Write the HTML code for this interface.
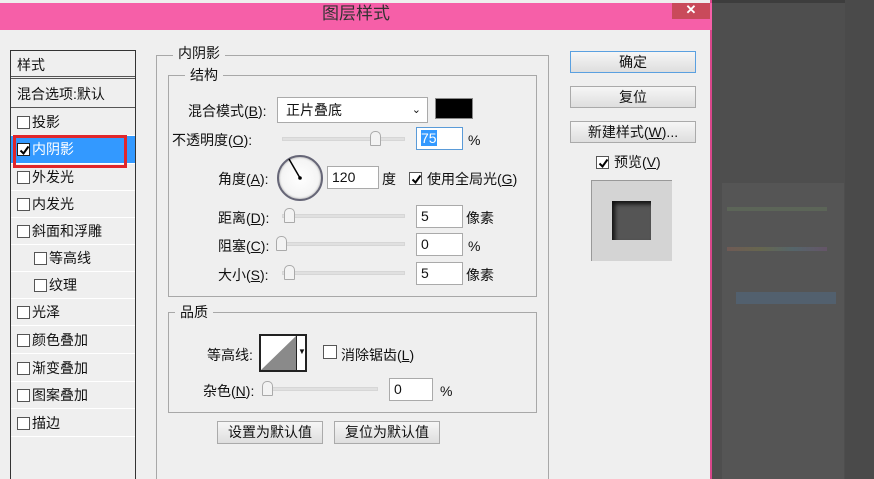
<!DOCTYPE html>
<html style="overflow:hidden"><head><meta charset="utf-8"><style>
*{box-sizing:border-box;margin:0;padding:0}
html,body{width:874px;height:479px;overflow:hidden}
body{position:relative;background:#4e4e4e;font-family:"Liberation Sans","Noto Sans CJK SC",sans-serif;font-size:14px;color:#111}
.a{position:absolute}
.dlg{left:0;top:0;width:712px;height:479px;background:#efefef;border-right:2px solid #d9478b}
.title{left:0;top:3px;width:712px;height:27px;background:#f65fa8;text-align:center;font-size:17px;line-height:22px;color:#333}
.lbl{white-space:nowrap;line-height:18px}
.list{left:10px;top:50px;width:126px;height:429px;border:1px solid #333;border-bottom:none;background:#efefef;overflow:hidden}
.item{position:absolute;left:0;width:124px;height:27px;border-bottom:1px solid #fff;line-height:26px;padding-left:6px}
.cb{display:inline-block;width:13px;height:13px;border:1px solid #555;background:#fff;vertical-align:-2px;margin-right:2px;position:relative}
.cb svg{position:absolute;left:1px;top:1px}
.grp{border:1px solid #a8a8a8}
.leg{background:#efefef;padding:0 5px;line-height:16px}
.inp{background:#fff;border:1px solid #aaa;height:23px;line-height:21px;padding-left:4px}
.sl{height:4px;background:#e0e0e0;border:1px solid #d6d6d6}
.th{width:11px;height:15px;border:1px solid #aaa;background:#f3f3f3;border-radius:5px 5px 1px 1px}
.btn{border:1px solid #aaa;background:linear-gradient(#f6f6f6,#dedede);text-align:center;line-height:20px;height:22px}
</style></head><body>
<div class="a" style="left:0;top:0;width:874px;height:3px;background:#3d3d3d"></div>
<div class="a" style="left:722px;top:183px;width:122px;height:296px;background:#555"></div>
<div class="a" style="left:845px;top:0;width:29px;height:479px;background:#4a4a4a"></div>
<div class="a" style="left:727px;top:207px;width:100px;height:4px;background:#5c6558"></div>
<div class="a" style="left:727px;top:247px;width:100px;height:4px;background:linear-gradient(90deg,#6f5a55,#66664f,#55656a,#655568)"></div>
<div class="a" style="left:736px;top:292px;width:100px;height:12px;background:#52606e"></div>
<div class="a dlg"></div>
<div class="a title">图层样式</div>
<div class="a" style="left:672px;top:3px;width:38px;height:16px;background:#c94a5a;color:#fff;text-align:center;font-size:13px;line-height:14px;font-weight:bold">✕</div>

<div class="a list">
 <div class="item" style="top:0;height:28px;line-height:28px;border-bottom:3px double #555">样式</div>
 <div class="item" style="top:30px;border-bottom:1px solid #555">混合选项:默认</div>
 <div class="item" style="top:58px"><span class="cb"></span>投影</div>
 <div class="item" style="top:85px;background:#3399ff;color:#fff;height:28px"><span class="cb" style="border-color:#222"><svg width="11" height="11"><path d="M1.5 5.5 L4.5 8.5 L9.5 1.5" stroke="#000" stroke-width="2" fill="none"/></svg></span>内阴影</div>
 <div class="item" style="top:113px"><span class="cb"></span>外发光</div>
 <div class="item" style="top:140px"><span class="cb"></span>内发光</div>
 <div class="item" style="top:167px"><span class="cb"></span>斜面和浮雕</div>
 <div class="item" style="top:194px;padding-left:23px"><span class="cb"></span>等高线</div>
 <div class="item" style="top:221px;padding-left:23px"><span class="cb"></span>纹理</div>
 <div class="item" style="top:248px"><span class="cb"></span>光泽</div>
 <div class="item" style="top:276px"><span class="cb"></span>颜色叠加</div>
 <div class="item" style="top:304px"><span class="cb"></span>渐变叠加</div>
 <div class="item" style="top:331px"><span class="cb"></span>图案叠加</div>
 <div class="item" style="top:359px"><span class="cb"></span>描边</div>
</div>
<div class="a" style="left:13px;top:135px;width:114px;height:33px;border:3px solid #e0262b"></div>

<div class="a grp" style="left:156px;top:55px;width:393px;height:430px"></div>
<div class="a leg lbl" style="left:173px;top:45px">内阴影</div>
<div class="a grp" style="left:168px;top:75px;width:369px;height:222px"></div>
<div class="a leg lbl" style="left:185px;top:67px">结构</div>

<div class="a lbl" style="left:188px;top:102px">混合模式(<u>B</u>):</div>
<div class="a inp" style="left:277px;top:97px;width:151px;height:26px;line-height:24px;padding-left:8px">正片叠底<span style="position:absolute;right:6px;font-size:11px">⌄</span></div>
<div class="a" style="left:435px;top:98px;width:38px;height:21px;background:#000;border:1px solid #888"></div>

<div class="a lbl" style="left:172px;top:131px">不透明度(<u>O</u>):</div>
<div class="a sl" style="left:282px;top:137px;width:123px"></div>
<div class="a th" style="left:370px;top:131px"></div>
<div class="a inp" style="left:416px;top:127px;width:47px;border-color:#5a9bd8"><span style="background:#3399ff;color:#fff">75</span></div>
<div class="a lbl" style="left:468px;top:131px">%</div>

<div class="a lbl" style="left:218px;top:170px">角度(<u>A</u>):</div>
<div class="a" style="left:277px;top:155px;width:46px;height:46px;border-radius:50%;border:2px solid #667;background:radial-gradient(#fff,#eee);box-shadow:inset 0 0 2px #999"></div>
<svg class="a" style="left:277px;top:155px" width="46" height="46"><line x1="23" y1="23" x2="12" y2="4" stroke="#000" stroke-width="1.5"/><circle cx="23" cy="23" r="1.8"/></svg>
<div class="a inp" style="left:327px;top:166px;width:52px">120</div>
<div class="a lbl" style="left:382px;top:170px">度</div>
<div class="a" style="left:409px;top:170px"><span class="cb"><svg width="11" height="11"><path d="M1.5 5.5 L4.5 8.5 L9.5 1.5" stroke="#000" stroke-width="2" fill="none"/></svg></span></div>
<div class="a lbl" style="left:427px;top:170px">使用全局光(<u>G</u>)</div>

<div class="a lbl" style="left:218px;top:209px">距离(<u>D</u>):</div>
<div class="a sl" style="left:282px;top:214px;width:123px"></div>
<div class="a th" style="left:284px;top:208px"></div>
<div class="a inp" style="left:416px;top:205px;width:47px">5</div>
<div class="a lbl" style="left:466px;top:209px">像素</div>

<div class="a lbl" style="left:218px;top:237px">阻塞(<u>C</u>):</div>
<div class="a sl" style="left:282px;top:242px;width:123px"></div>
<div class="a th" style="left:276px;top:236px"></div>
<div class="a inp" style="left:416px;top:233px;width:47px">0</div>
<div class="a lbl" style="left:468px;top:237px">%</div>

<div class="a lbl" style="left:218px;top:266px">大小(<u>S</u>):</div>
<div class="a sl" style="left:282px;top:271px;width:123px"></div>
<div class="a th" style="left:284px;top:265px"></div>
<div class="a inp" style="left:416px;top:262px;width:47px">5</div>
<div class="a lbl" style="left:466px;top:266px">像素</div>

<div class="a grp" style="left:168px;top:312px;width:369px;height:101px"></div>
<div class="a leg lbl" style="left:175px;top:304px">品质</div>
<div class="a lbl" style="left:207px;top:346px">等高线:</div>
<div class="a" style="left:259px;top:334px;width:48px;height:38px;border:2px solid #222;background:#fff"></div>
<svg class="a" style="left:261px;top:336px" width="35" height="34"><polygon points="0,34 35,0 35,34" fill="#8a8a8a"/></svg>
<div class="a" style="left:296px;top:334px;width:11px;height:38px;border-left:1px solid #222;font-size:8px;text-align:center;line-height:36px">▼</div>
<div class="a" style="left:323px;top:345px;width:14px;height:14px;border:1px solid #555;background:#fff"></div>
<div class="a lbl" style="left:341px;top:346px">消除锯齿(<u>L</u>)</div>

<div class="a lbl" style="left:203px;top:382px">杂色(<u>N</u>):</div>
<div class="a sl" style="left:262px;top:387px;width:116px"></div>
<div class="a th" style="left:262px;top:381px"></div>
<div class="a inp" style="left:389px;top:378px;width:44px">0</div>
<div class="a lbl" style="left:440px;top:382px">%</div>

<div class="a btn" style="left:217px;top:421px;width:106px;height:23px">设置为默认值</div>
<div class="a btn" style="left:334px;top:421px;width:106px;height:23px">复位为默认值</div>

<div class="a btn" style="left:570px;top:51px;width:126px;border-color:#5aa0e0">确定</div>
<div class="a btn" style="left:570px;top:86px;width:126px">复位</div>
<div class="a btn" style="left:570px;top:121px;width:126px">新建样式(<u>W</u>)...</div>
<div class="a" style="left:596px;top:154px"><span class="cb"><svg width="11" height="11"><path d="M1.5 5.5 L4.5 8.5 L9.5 1.5" stroke="#000" stroke-width="2" fill="none"/></svg></span></div>
<div class="a lbl" style="left:614px;top:153px">预览(<u>V</u>)</div>
<div class="a" style="left:591px;top:180px;width:81px;height:81px;background:#d4d4d4;border-top:1px solid #999;border-left:1px solid #999"></div>
<div class="a" style="left:612px;top:201px;width:39px;height:39px;background:#555;box-shadow:inset 3px 3px 4px #111"></div>
</body></html>
